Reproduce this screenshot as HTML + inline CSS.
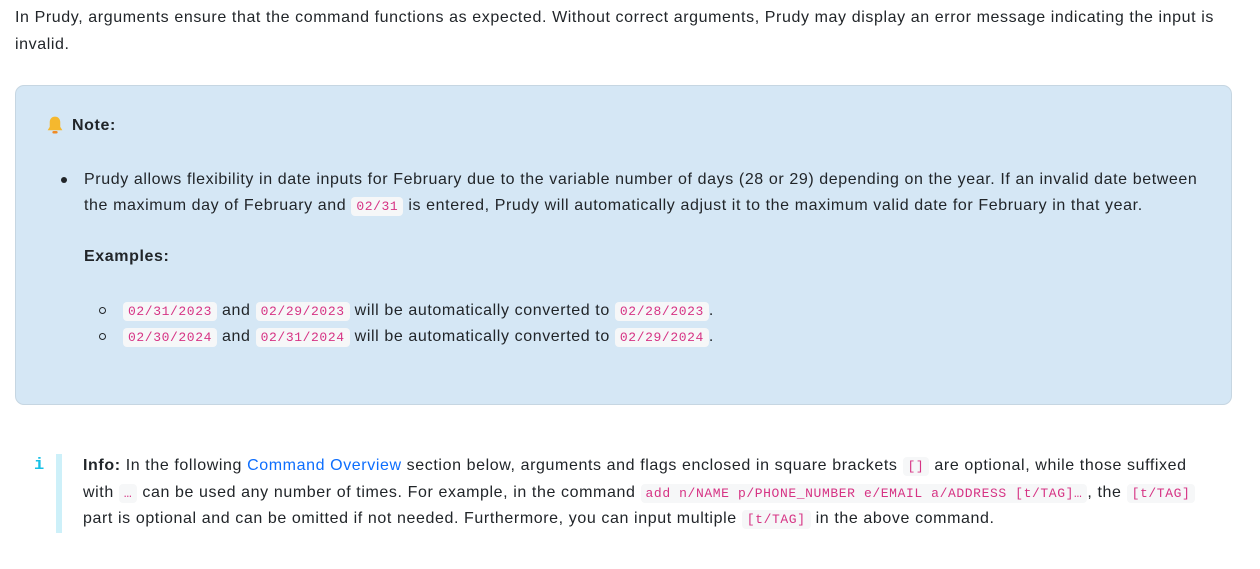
<!DOCTYPE html>
<html><head><style>
body{margin:0;background:#fff;font-family:"Liberation Sans",sans-serif;font-size:16px;letter-spacing:0.6px;color:#212529;width:1260px;height:569px;overflow:hidden;position:relative}
.l{position:absolute;white-space:nowrap;line-height:20px}
code{font-family:"Liberation Mono",monospace;font-size:13px;letter-spacing:0.6px;color:#d63384;background:#f6f7f8;border-radius:4px;padding:2px 5px}
.box{position:absolute;left:15px;top:85px;width:1215px;height:318px;background:#d5e7f5;border:1px solid #c6d6e2;border-radius:9px}
.dot{position:absolute;width:6px;height:6px;border-radius:50%;background:#212529}
.ring{position:absolute;width:5px;height:5px;border-radius:50%;border:1.5px solid #212529}
a{color:#0d6efd;text-decoration:none}
</style></head><body>
<div class="l" style="left:15px;top:8px">In Prudy, arguments ensure that the command functions as expected. Without correct arguments, Prudy may display an error message indicating the input is</div>
<div class="l" style="left:15px;top:35px">invalid.</div>
<div class="box"></div>
<svg style="position:absolute;left:45px;top:115px" width="20" height="20" viewBox="0 0 18 19"><path d="M9 1.5c-3 0-5 2.3-5 5.3v4.5L2 14.5h14l-2-3.2V6.8c0-3-2-5.3-5-5.3z" fill="#f5b82e"/><rect x="6.5" y="15.2" width="5" height="2.4" rx="1.2" fill="#f08a24"/></svg>
<div class="l" style="left:72px;top:116px;font-weight:bold">Note:</div>
<div class="dot" style="left:61px;top:177px"></div>
<div class="l" style="left:84px;top:170px">Prudy allows flexibility in date inputs for February due to the variable number of days (28 or 29) depending on the year. If an invalid date between</div>
<div class="l" style="left:84px;top:196px">the maximum day of February and <code>02/31</code> is entered, Prudy will automatically adjust it to the maximum valid date for February in that year.</div>
<div class="l" style="left:84px;top:247px;font-weight:bold">Examples:</div>
<div class="ring" style="left:99px;top:307px"></div>
<div class="ring" style="left:99px;top:333px"></div>
<div class="l" style="left:123px;top:301px"><code>02/31/2023</code> and <code>02/29/2023</code> will be automatically converted to <code>02/28/2023</code>.</div>
<div class="l" style="left:123px;top:327px"><code>02/30/2024</code> and <code>02/31/2024</code> will be automatically converted to <code>02/29/2024</code>.</div>
<div class="l" style="left:34px;top:456px;color:#17c0e6;font-family:'Liberation Mono',monospace;font-weight:bold;font-size:17px">i</div>
<div style="position:absolute;left:56px;top:454px;width:6px;height:79px;background:#cdf0f9"></div>
<div class="l" style="left:83px;top:456px"><b>Info:</b> In the following <a>Command Overview</a> section below, arguments and flags enclosed in square brackets <code>[]</code> are optional, while those suffixed</div>
<div class="l" style="left:83px;top:483px">with <code>…</code> can be used any number of times. For example, in the command <code>add n/NAME p/PHONE_NUMBER e/EMAIL a/ADDRESS [t/TAG]…</code>, the <code>[t/TAG]</code></div>
<div class="l" style="left:83px;top:509px">part is optional and can be omitted if not needed. Furthermore, you can input multiple <code>[t/TAG]</code> in the above command.</div>
</body></html>
